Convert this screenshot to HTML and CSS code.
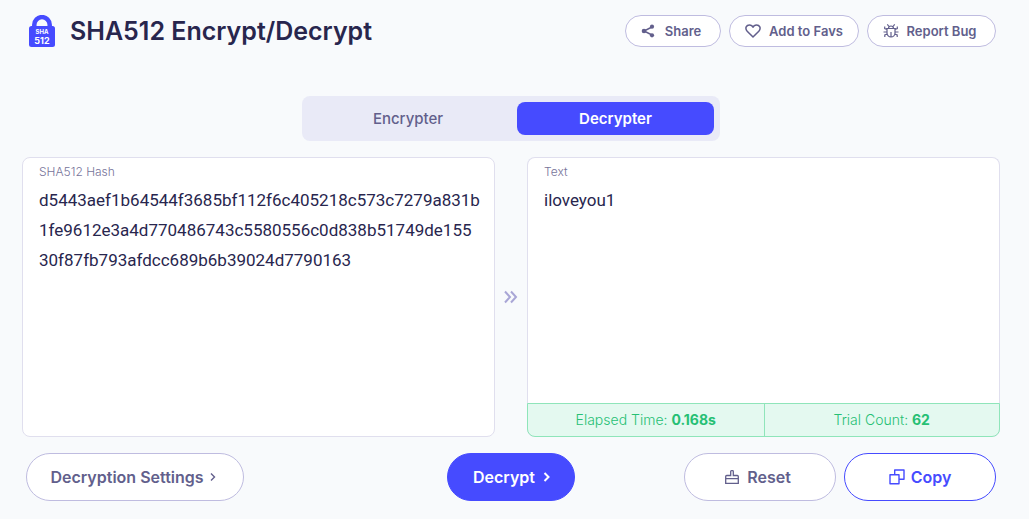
FILE: index.html
```html
<!DOCTYPE html>
<html lang="en">
<head>
<meta charset="utf-8">
<meta name="viewport" content="width=device-width, initial-scale=1">
<title>SHA512 Encrypt/Decrypt</title>
<link rel="stylesheet" href="styles.css">
</head>
<body>
<main class="tool">
  <header class="header">
    <svg class="logo" viewBox="0 0 26 32" width="26" height="32" aria-hidden="true">
      <path d="M5.300 13V9.800a7.700 7.700 0 0 1 15.400 0V13" fill="none" stroke="#464bff" stroke-width="4.500"/>
      <rect y="11" width="26" height="21" rx="2.500" fill="#464bff"/>
      <text x="13" y="19" class="logo-small">SHA</text>
      <text x="13" y="29" class="logo-big">512</text>
    </svg>
    <h1 class="title">SHA512 Encrypt/Decrypt</h1>
    <div class="actions">
      <button type="button" class="pill share">
        <svg viewBox="0 0 14 14" width="14" height="14" aria-hidden="true"><path d="M11 3 3 7l8 4" fill="none" stroke="currentColor" stroke-width="1.500"/><g fill="currentColor"><circle cx="11" cy="2.700" r="2.100"/><circle cx="3" cy="7" r="2.300"/><circle cx="11" cy="11.300" r="2.100"/></g></svg>
        Share
      </button>
      <button type="button" class="pill favs">
        <svg viewBox="0 0 16 16" width="16" height="16" aria-hidden="true"><path d="M8 14 2.200 8.200C-.5 5 1.500 1.900 4.400 1.900 6.300 1.900 7.500 3 8 4.200 8.500 3 9.700 1.900 11.600 1.900c2.900 0 4.900 3.100 2.200 6.300z" fill="none" stroke="currentColor" stroke-width="1.500" stroke-linejoin="round"/></svg>
        Add to Favs
      </button>
      <button type="button" class="pill bug">
        <svg viewBox="0 0 16 16" width="16" height="16" aria-hidden="true"><path d="M4 5.500h8V10a4 4 0 0 1-8 0zM5.500 5.500a2.500 2.500 0 0 1 5 0M8 9v5M4 6.500 1.700 5.500V3.500M12 6.500l2.300-1v-2M4 9H.5M12 9h3.500M4.300 11l-2.500 1v2M11.700 11l2.500 1v2M6 3.500 4.300 1.300M10 3.500l1.700-2.200" fill="none" stroke="currentColor" stroke-width="1.200"/></svg>
        Report Bug
      </button>
    </div>
  </header>

  <nav class="switch" aria-label="Mode">
    <button type="button" class="tab">Encrypter</button>
    <button type="button" class="tab tab-active" aria-pressed="true">Decrypter</button>
  </nav>

  <section class="panels">
    <div class="panel">
      <label class="label" for="hash">SHA512 Hash</label>
      <textarea class="field" id="hash" spellcheck="false">d5443aef1b64544f3685bf112f6c405218c573c7279a831b1fe9612e3a4d770486743c5580556c0d838b51749de15530f87fb793afdcc689b6b39024d7790163</textarea>
    </div>
    <svg class="arrow" viewBox="0 0 14 14" width="14" height="14" aria-hidden="true"><path d="m1 1.500 5 5.500-5 5.500M7 1.500 12 7l-5 5.500" fill="none" stroke="#a9a6d6" stroke-width="2"/></svg>
    <div class="panel panel-result">
      <label class="label" for="text">Text</label>
      <textarea class="field" id="text" spellcheck="false" readonly>iloveyou1</textarea>
      <div class="stats">
        <div class="stat">Elapsed Time: <b>0.168s</b></div>
        <div class="stat">Trial Count: <b>62</b></div>
      </div>
    </div>
  </section>

  <footer class="footer">
    <button type="button" class="button settings">Decryption Settings
      <svg viewBox="0 0 6 10" width="6" height="10" aria-hidden="true"><path d="m1 1.500 3.500 3.500L1 8.500" fill="none" stroke="currentColor" stroke-width="1.400"/></svg>
    </button>
    <button type="button" class="button primary">Decrypt
      <svg viewBox="0 0 8 10" width="8" height="10" aria-hidden="true"><path d="m1.500 1 4 4-4 4" fill="none" stroke="currentColor" stroke-width="2"/></svg>
    </button>
    <div class="pair">
      <button type="button" class="button reset">
        <svg viewBox="0 0 14 14" width="14" height="14" aria-hidden="true"><path d="M.7 13.300V6.500q0-1 1-1h4V1.500q0-.8.800-.8h1q.8 0 .8.800v4h4q1 0 1 1v6.800zM.7 8.700h12.600" fill="none" stroke="currentColor" stroke-width="1.300"/></svg>
        Reset
      </button>
      <button type="button" class="button copy">
        <svg viewBox="0 0 16 16" width="16" height="16" aria-hidden="true"><path d="M1 5.700h9v9H1zM5.700 5.500V1h9.300v9.300h-4.800" fill="none" stroke="currentColor" stroke-width="1.400" stroke-linejoin="round"/></svg>
        Copy
      </button>
    </div>
  </footer>
</main>
</body>
</html>
```
FILE: styles.css
```css
* { box-sizing: border-box; }

body {
  margin: 0;
  background: #f8fafc;
  color: #28264e;
  font-family: Inter, "Liberation Sans", sans-serif;
}

button, textarea { font-family: inherit; }

.tool { padding: 15px 29px 18px 22px; }

.header {
  display: flex;
  align-items: center;
  margin: 0 4px 0 7px;
}

.logo { flex: none; }

.logo-small, .logo-big {
  fill: #fff;
  font-weight: 700;
  text-anchor: middle;
}
.logo-small { font-size: 6px; }
.logo-big { font-size: 9px; }

.title {
  margin: 0 auto 0 15px;
  font-size: 25px;
  line-height: 32px;
  font-weight: 600;
}

.actions { display: flex; gap: 8px; }

.pill {
  display: flex;
  align-items: center;
  justify-content: center;
  height: 32px;
  padding: 0;
  border: 1px solid #bfbce0;
  border-radius: 16px;
  background: #fff;
  color: #625f8c;
  font-size: 13px;
  font-weight: 600;
  gap: 8px;
}
.share { width: 96px; padding-right: 4px; gap: 10px; }
.favs { width: 130px; }
.bug { width: 129px; padding-right: 4px; }

.switch {
  display: grid;
  grid-template-columns: 1fr 197px;
  gap: 9px;
  width: 418px;
  margin: 49px auto 16px;
  padding: 6px;
  border-radius: 8px;
  background: #e9eaf7;
}

.tab {
  height: 33px;
  border: 0;
  border-radius: 8px;
  background: transparent;
  color: #625f8c;
  font-size: 15px;
  font-weight: 500;
}
.tab-active {
  background: #464bff;
  color: #fff;
  font-weight: 600;
}

.panels {
  display: grid;
  grid-template-columns: 1fr 32px 1fr;
  align-items: center;
  justify-items: center;
}

.panel {
  display: flex;
  flex-direction: column;
  width: 100%;
  height: 280px;
  border: 1px solid #e0dfee;
  border-radius: 8px;
  background: #fff;
}

.label {
  padding: 6px 16px 0;
  color: #77749a;
  font-size: 12px;
  line-height: 16px;
  font-weight: 300;
}

.field {
  flex: 1;
  width: 100%;
  padding: 5px 14px 0 16px;
  border: 0;
  outline: 0;
  resize: none;
  background: transparent;
  color: #28264e;
  font-family: Roboto, sans-serif;
  font-size: 17px;
  line-height: 30px;
  word-break: break-all;
}

.panel-result { border-bottom: 0; }

.stats {
  display: grid;
  grid-template-columns: 1fr 1fr;
  margin: 0 -1px;
  border: 1px solid #8fe5ba;
  border-radius: 0 0 8px 8px;
  background: #e4f9f0;
  color: #26c074;
  font-size: 14px;
  font-weight: 300;
  line-height: 32px;
  text-align: center;
}
.stat + .stat { border-left: 1px solid #8fe5ba; }
.stat b { font-weight: 700; }

.footer {
  display: grid;
  grid-template-columns: 1fr auto 1fr;
  margin: 16px 4px 0;
}

.button {
  display: flex;
  align-items: center;
  justify-content: center;
  height: 48px;
  padding: 0;
  border: 1px solid #bfbce0;
  border-radius: 24px;
  background: #fff;
  color: #625f8c;
  font-size: 16px;
  font-weight: 600;
  gap: 8px;
}
.settings { width: 218px; padding-right: 4px; gap: 6px; }
.primary {
  width: 128px;
  padding-left: 2px;
  border-color: #464bff;
  background: #464bff;
  color: #fff;
}
.pair { display: flex; justify-content: flex-end; gap: 8px; }
.reset, .copy { width: 152px; }
.reset { padding-right: 4px; }
.copy { border-color: #464bff; color: #464bff; gap: 6px; }
```
